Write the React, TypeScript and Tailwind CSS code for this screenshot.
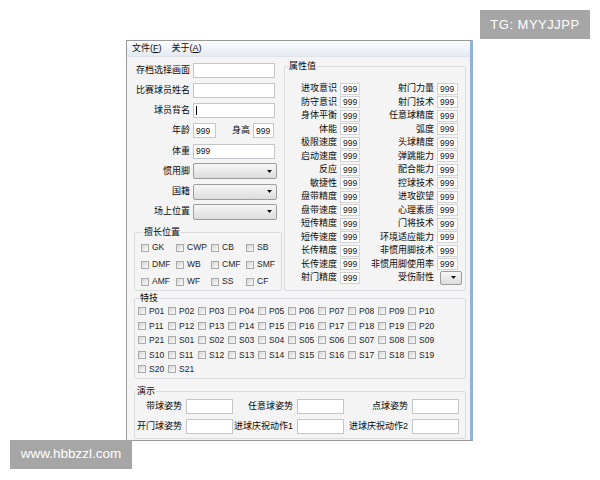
import React from "react";

const leftRows = ["存档选择画面", "比赛球员姓名"];

const attrLeft = [
  "进攻意识",
  "防守意识",
  "身体平衡",
  "体能",
  "极限速度",
  "启动速度",
  "反应",
  "敏捷性",
  "盘带精度",
  "盘带速度",
  "短传精度",
  "短传速度",
  "长传精度",
  "长传速度",
  "射门精度",
];

const attrRight = [
  "射门力量",
  "射门技术",
  "任意球精度",
  "弧度",
  "头球精度",
  "弹跳能力",
  "配合能力",
  "控球技术",
  "进攻欲望",
  "心理素质",
  "门将技术",
  "环境适应能力",
  "非惯用脚技术",
  "非惯用脚使用率",
];

const positions = ["GK", "CWP", "CB", "SB", "DMF", "WB", "CMF", "SMF", "AMF", "WF", "SS", "CF"];

const pad = (n: number) => String(n).padStart(2, "0");
const skills = [
  ...Array.from({ length: 21 }, (_, i) => `P${pad(i + 1)}`),
  ...Array.from({ length: 21 }, (_, i) => `S${pad(i + 1)}`),
];

function TextBox({ className = "", value = "", cursor = false }: { className?: string; value?: string; cursor?: boolean }) {
  return (
    <div className={`flex items-center border border-[#c3c6cb] bg-white pl-[2px] text-[8.5px] leading-none text-[#111] ${className}`}>
      {cursor && <span className="h-[9px] w-px bg-black" />}
      {value}
    </div>
  );
}

function Combo({ className = "" }: { className?: string }) {
  return (
    <div className={`flex items-center justify-end rounded-[2px] border border-[#9c9c9c] bg-gradient-to-b from-[#f7f7f7] to-[#dcdcdc] pr-[4px] ${className}`}>
      <svg width="5" height="3" viewBox="0 0 5 3">
        <polygon points="0,0 5,0 2.5,3" fill="#111" />
      </svg>
    </div>
  );
}

function Check({ label }: { label: string }) {
  return (
    <div className="flex items-center gap-[3px]">
      <span className="h-[8px] w-[8px] border border-[#a9a9a9] bg-gradient-to-br from-[#d6d6d6] to-[#fbfbfb]" />
      <span className="text-[8.5px] leading-none text-[#222]">{label}</span>
    </div>
  );
}

function Label({ children, className = "" }: { children: React.ReactNode; className?: string }) {
  return <span className={`whitespace-nowrap text-[9px] leading-none text-[#0a0a0a] ${className}`}>{children}</span>;
}

export default function App() {
  return (
    <div className="relative h-[480px] w-[600px] overflow-hidden bg-white font-['Liberation_Sans','Noto_Sans_CJK_SC',sans-serif]">
      <div className="pl-[126px] pt-[40px]">
        <div className="h-[401px] w-[347px] border-b border-l border-t border-[#9a9a9a] border-r-[3px] border-r-[#8fb3d9] bg-[#f4f4f4]">
          {/* menu */}
          <div className="flex h-[16px] items-center gap-[10px] border-b border-[#dfe3ea] bg-gradient-to-b from-[#fbfcfe] to-[#e4e9f1] pl-[5px]">
            <Label>
              文件(<span className="underline">F</span>)
            </Label>
            <Label>
              关于(<span className="underline">A</span>)
            </Label>
          </div>

          <div className="flex flex-col pl-[7px] pr-[4px]">
            <div className="flex h-[234px] gap-[3px]">
              {/* left part */}
              <div className="flex w-[147px] flex-col pt-[3px]">
                {leftRows.map((l) => (
                  <div key={l} className="flex h-[20.3px] items-center">
                    <div className="flex w-[56px] justify-end">
                      <Label>{l}</Label>
                    </div>
                    <TextBox className="ml-[3px] h-[15px] w-[82px]" />
                  </div>
                ))}
                <div className="flex h-[20.3px] items-center">
                  <div className="flex w-[56px] justify-end">
                    <Label>球员背名</Label>
                  </div>
                  <TextBox className="ml-[3px] h-[15px] w-[82px]" cursor />
                </div>
                <div className="flex h-[20.3px] items-center">
                  <div className="flex w-[56px] justify-end">
                    <Label>年龄</Label>
                  </div>
                  <TextBox className="ml-[3px] h-[15px] w-[23px]" value="999" />
                  <Label className="ml-[16px]">身高</Label>
                  <TextBox className="ml-[3px] h-[15px] w-[21px]" value="999" />
                </div>
                <div className="flex h-[20.3px] items-center">
                  <div className="flex w-[56px] justify-end">
                    <Label>体重</Label>
                  </div>
                  <TextBox className="ml-[3px] h-[15px] w-[82px]" value="999" />
                </div>
                {["惯用脚", "国籍", "场上位置"].map((l) => (
                  <div key={l} className="flex h-[20.3px] items-center">
                    <div className="flex w-[56px] justify-end">
                      <Label>{l}</Label>
                    </div>
                    <Combo className="ml-[3px] h-[16px] w-[84px]" />
                  </div>
                ))}

                <fieldset className="mt-[4px] mr-[1px] flex-1 rounded-[2px] border border-[#d9dcdf] pl-[6px]">
                  <legend className="ml-[2px] h-[12px] px-[1px] text-[9px] leading-[12px] text-[#0a0a0a]">擅长位置</legend>
                  <div className="grid grid-cols-[repeat(4,35px)] pt-[1px]">
                    {positions.map((p) => (
                      <div key={p} className="flex h-[17px] items-center">
                        <Check label={p} />
                      </div>
                    ))}
                  </div>
                </fieldset>
              </div>

              {/* attributes */}
              <fieldset className="mt-[3px] w-[182px] rounded-[2px] border border-[#d9dcdf]">
                <legend className="ml-[3px] h-[12px] px-[1px] text-[9px] leading-[12px] text-[#0a0a0a]">属性值</legend>
                <div className="grid grid-cols-[77px_103px] pt-[10px]">
                  {attrLeft.map((l, i) => (
                    <React.Fragment key={l}>
                      <div className="flex h-[13.5px] items-center justify-end gap-[3px] pr-[2px]">
                        <Label>{l}</Label>
                        <TextBox className="h-[12px] w-[20px] border-[#d3d3d3]" value="999" />
                      </div>
                      {i < attrRight.length ? (
                        <div className="flex h-[13.5px] items-center justify-end gap-[3px] pr-[7px]">
                          <Label>{attrRight[i]}</Label>
                          <TextBox className="h-[12px] w-[21px] border-[#d3d3d3]" value="999" />
                        </div>
                      ) : (
                        <div className="flex h-[13.5px] items-center justify-end gap-[6px] pr-[3px]">
                          <Label>受伤耐性</Label>
                          <Combo className="h-[14px] w-[22px] pr-[5px]" />
                        </div>
                      )}
                    </React.Fragment>
                  ))}
                </div>
              </fieldset>
            </div>

            {/* skills */}
            <fieldset className="mt-[1px] rounded-[2px] border border-[#d9dcdf] pl-[3px] pb-[1.5px]">
              <legend className="ml-[1px] h-[12px] px-[1px] text-[9px] leading-[12px] text-[#0a0a0a]">特技</legend>
              <div className="grid grid-cols-[repeat(10,30px)]">
                {skills.map((s) => (
                  <div key={s} className="flex h-[14.5px] items-center">
                    <Check label={s} />
                  </div>
                ))}
              </div>
            </fieldset>

            {/* demo */}
            <fieldset className="mt-[6px] rounded-[2px] border border-[#d9dcdf] pb-[2px]">
              <legend className="ml-[1px] h-[12px] px-[1px] text-[9px] leading-[12px] text-[#0a0a0a]">演示</legend>
              <div className="grid grid-cols-[98px_111px_115px]">
                {["带球姿势", "任意球姿势", "点球姿势", "开门球姿势", "进球庆祝动作1", "进球庆祝动作2"].map((l) => (
                  <div key={l} className="flex h-[19.5px] items-center justify-end gap-[4px]">
                    <Label>{l}</Label>
                    <TextBox className="h-[15px] w-[47px]" />
                  </div>
                ))}
              </div>
            </fieldset>
          </div>
        </div>
      </div>

      {/* watermarks */}
      <div className="absolute left-[480px] top-[10px] flex h-[29px] w-[110px] items-center justify-center bg-[#a6a6a6] text-[13px] tracking-[0.5px] text-white">
        TG: MYYJJPP
      </div>
      <div className="absolute left-[10px] top-[440px] flex h-[29px] w-[122px] items-center justify-center bg-[#a6a6a6] text-[13.5px] text-white">
        www.hbbzzl.com
      </div>
    </div>
  );
}
